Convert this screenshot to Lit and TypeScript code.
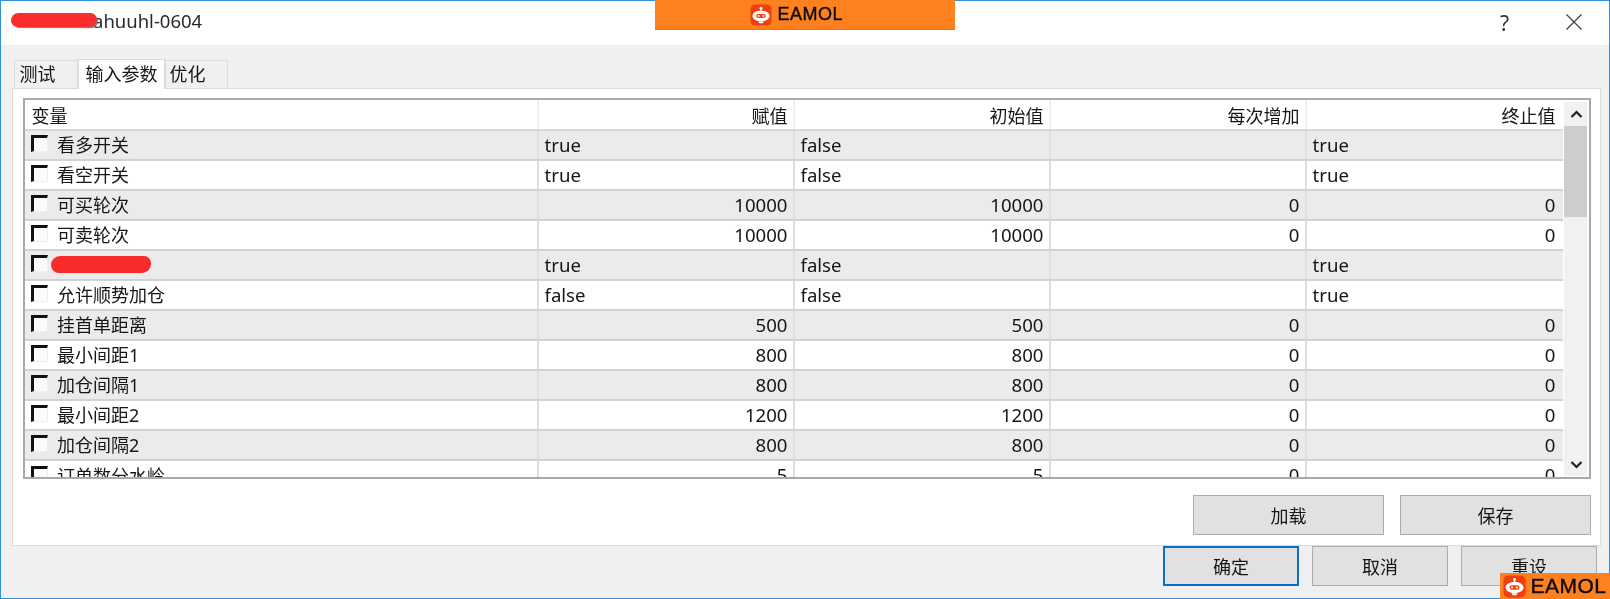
import { LitElement, html, css, svg } from "lit";
import { customElement } from "lit/decorators.js";

type Row = { name: string; vals: string[]; left?: boolean; redact?: boolean };
const tf = (a: string) => [a, "false", "", "true"];
const num = (a: string, z = "0") => [a, a, z, z];
const rows: Row[] = [
  { name: "看多开关", vals: tf("true"), left: true },
  { name: "看空开关", vals: tf("true"), left: true },
  { name: "可买轮次", vals: num("10000") },
  { name: "可卖轮次", vals: num("10000") },
  { name: "", vals: tf("true"), left: true, redact: true },
  { name: "允许顺势加仓", vals: tf("false"), left: true },
  { name: "挂首单距离", vals: num("500") },
  { name: "最小间距1", vals: num("800") },
  { name: "加仓间隔1", vals: num("800") },
  { name: "最小间距2", vals: num("1200") },
  { name: "加仓间隔2", vals: num("800") },
  { name: "订单数分水岭", vals: num("5") },
];

const robot = svg`<svg class="robot" viewBox="0 0 24 24">
  <rect x="0.5" y="0.5" width="23" height="23" rx="5" fill="#f0400f"/>
  <circle cx="12" cy="4.6" r="1.5" fill="#fff"/>
  <path d="M12 5v3" stroke="#fff" stroke-width="1.2"/>
  <ellipse cx="12" cy="13" rx="9.4" ry="6" fill="#fff"/>
  <path d="M9 19h6l-1 2h-4z" fill="#fff"/>
  <rect x="6.8" y="10.8" width="10.4" height="4.6" rx="2.3" fill="#f0400f"/>
  <circle cx="9.5" cy="13.1" r="1.1" fill="#fff"/>
  <circle cx="14.5" cy="13.1" r="1.1" fill="#fff"/>
</svg>`;

@customElement("app-root")
export class AppRoot extends LitElement {
  static styles = css`
    :host {
      display: block;
      width: 1610px;
      height: 599px;
      overflow: hidden;
      background: #fff;
      font-family: "Noto Sans", "Noto Sans CJK SC", sans-serif;
      font-size: 18px;
      color: #161616;
    }
    .window {
      position: relative;
      box-sizing: border-box;
      width: 1610px;
      height: 599px;
      border: 1px solid #2f8fe0;
      display: flex;
      flex-direction: column;
      filter: blur(0.5px);
    }
    .title {
      flex: 0 0 44px;
      background: #fff;
      display: flex;
      align-items: center;
      padding: 0 27px 0 16px;
    }
    .title .name { flex: 1; font-size: 18.5px; color: #2a2a2a; margin-top: -5px; }
    .title .pad { display: inline-block; width: 76px; }
    .help { font-size: 21px; color: #333; margin-right: 57px; margin-top: -1px; }
    .close { width: 16px; height: 16px; margin-top: -2px; }
    .body {
      flex: 1;
      background: #f0f0f0;
      display: flex;
      flex-direction: column;
      padding: 13px 8px 0 10.5px;
    }
    .tabs { display: flex; height: 30px; align-items: flex-end; padding-left: 2px; }
    .tab {
      box-sizing: border-box;
      height: 28px;
      line-height: 26px;
      background: #f0f0f0;
      border: 1px solid #dcdcdc;
      border-bottom: none;
      padding: 0 5px;
      white-space: nowrap;
    }
    .tab.t1 { width: 64px; }
    .tab.t2 {
      width: 87px;
      height: 30px;
      line-height: 29px;
      background: #fff;
      padding: 0 7px;
      margin-bottom: -1px;
      position: relative;
      z-index: 1;
    }
    .tab.t3 { width: 63px; padding: 0 4px; }
    .pane {
      box-sizing: border-box;
      height: 458px;
      background: #fff;
      border: 1px solid #dcdcdc;
      padding: 9px 9px 0 10px;
      display: flex;
      flex-direction: column;
    }
    .list {
      box-sizing: border-box;
      height: 381px;
      border: 2px solid #a6a9ad;
      display: flex;
      overflow: hidden;
      background: #fff;
    }
    .grid { flex: 1; min-width: 0; overflow: hidden; }
    .row {
      display: grid;
      grid-template-columns: 512px 256px 256px 256px 257px;
      height: 30px;
      box-sizing: border-box;
      line-height: 27px;
      border-bottom: 2px solid #d2d2d2;
    }
    .row.head { height: 31px; line-height: 33px; border-bottom: 2px solid #d8d8d8; }
    .row.alt { background: #ebebeb; }
    .row.last { border-bottom: none; }
    .cell {
      box-sizing: border-box;
      padding: 0 5px 0 6px;
      text-align: right;
      white-space: nowrap;
      overflow: hidden;
      border-left: 2px solid #dedede;
      font-size: 18.6px;
    }
    .row.head .cell { font-size: 18px; border-left-color: #f0f0f0; }
    .cell.l { text-align: left; }
    .cell.first {
      border-left: none;
      text-align: left;
      padding-left: 6px;
      display: flex;
      align-items: center;
      gap: 9.5px;
      position: relative;
      font-size: 18px;
    }
    .row.head .cell.first { padding: 4px 0 0 7px; }
    .row .cell:last-child { padding-right: 6px; }
    .check {
      flex: 0 0 auto;
      box-sizing: border-box;
      width: 17px;
      height: 17px;
      margin-top: -3px;
      border-top: 3px solid #111;
      border-left: 3px solid #111;
      border-right: 1px solid #eee;
      border-bottom: 1px solid #eee;
      background: #fbfbfb;
    }
    .scribble {
      position: absolute;
      left: 26px;
      top: 5px;
      width: 100px;
      height: 17px;
      background: #f92a2a;
      border-radius: 9px 7px 9px 8px;
    }
    .scroll {
      flex: 0 0 23px;
      margin: 2px 2px 1px 1px;
      display: flex;
      flex-direction: column;
      background: #f1f1f1;
    }
    .arrow { flex: 0 0 24px; display: flex; align-items: center; justify-content: center; padding-left: 2px; box-sizing: border-box; }
    .arrow svg { width: 13px; height: 9px; }
    .thumb { flex: 0 0 91px; background: #cdcdcd; }
    .spacer { flex: 1; }
    .actions, .footer { display: flex; justify-content: flex-end; }
    .actions { gap: 16px; margin-top: 16px; }
    .btn {
      box-sizing: border-box;
      background: #e1e1e1;
      border: 1.5px solid #adadad;
      display: flex;
      align-items: center;
      justify-content: center;
      height: 40px;
    }
    .actions .btn { width: 191px; }
    .footer { gap: 13px; padding: 0 4px 0 0; }
    .footer .btn { width: 136px; }
    .btn.primary { border: 2px solid #0a6fc9; }
    .redact-title {
      position: absolute;
      left: 9.5px;
      top: 11.5px;
      width: 86px;
      height: 14.5px;
      background: #fb2d2d;
      border-radius: 8px 7px 8px 7px;
      box-shadow: 2px 2px 1px -1px #777;
    }
    .logo {
      position: absolute;
      display: flex;
      align-items: center;
      background: #ff801f;
      color: #0c0c0c;
      font-family: "Liberation Sans", sans-serif;
      letter-spacing: 0.5px;
      -webkit-text-stroke: 0.4px #0c0c0c;
      box-sizing: border-box;
    }
    .logo.top {
      left: 653.5px;
      top: -1px;
      width: 300px;
      height: 30px;
      padding-left: 95px;
      gap: 6px;
      font-size: 18px;
      border-bottom: 1px solid #f27214;
    }
    .logo.top .robot { width: 22px; height: 22px; flex: 0 0 22px; }
    .logo.bottom {
      left: 1498.5px;
      top: 571.5px;
      width: 110px;
      height: 27px;
      gap: 5px;
      padding-left: 3px;
      font-size: 21px;
    }
    .logo.bottom .robot { width: 23px; height: 23px; flex: 0 0 23px; }
  `;

  render() {
    return html`
      <div class="window">
        <div class="title">
          <div class="name"><span class="pad"></span>ahuuhl-0604</div>
          <span class="help">?</span>
          <svg class="close" viewBox="0 0 16 16"><path d="M0.5 0.5L15.5 15.5M15.5 0.5L0.5 15.5" stroke="#444" stroke-width="1.3" fill="none"/></svg>
        </div>
        <div class="body">
          <div class="tabs">
            <div class="tab t1">测试</div>
            <div class="tab t2">输入参数</div>
            <div class="tab t3">优化</div>
          </div>
          <div class="pane">
            <div class="list">
              <div class="grid">
                <div class="row head">
                  <div class="cell first">变量</div>
                  <div class="cell">赋值</div>
                  <div class="cell">初始值</div>
                  <div class="cell">每次增加</div>
                  <div class="cell">终止值</div>
                </div>
                ${rows.map(
                  (r, i) => html`
                    <div class="row ${i % 2 === 0 ? "alt" : ""} ${i === rows.length - 1 ? "last" : ""}">
                      <div class="cell first">
                        <span class="check"></span>
                        <span>${r.name}</span>
                        ${r.redact ? html`<span class="scribble"></span>` : ""}
                      </div>
                      ${r.vals.map((v) => html`<div class="cell ${r.left ? "l" : ""}">${v}</div>`)}
                    </div>
                  `
                )}
              </div>
              <div class="scroll">
                <div class="arrow"><svg viewBox="0 0 13 9"><path d="M1.5 7L6.5 2L11.5 7" fill="none" stroke="#222" stroke-width="2.2"/></svg></div>
                <div class="thumb"></div>
                <div class="spacer"></div>
                <div class="arrow"><svg viewBox="0 0 13 9"><path d="M1.5 2L6.5 7L11.5 2" fill="none" stroke="#222" stroke-width="2.2"/></svg></div>
              </div>
            </div>
            <div class="actions">
              <div class="btn">加载</div>
              <div class="btn">保存</div>
            </div>
          </div>
          <div class="footer">
            <div class="btn primary">确定</div>
            <div class="btn">取消</div>
            <div class="btn">重设</div>
          </div>
        </div>
        <div class="redact-title"></div>
        <div class="logo top">${robot}<span>EAMOL</span></div>
        <div class="logo bottom">${robot}<span>EAMOL</span></div>
      </div>
    `;
  }
}
